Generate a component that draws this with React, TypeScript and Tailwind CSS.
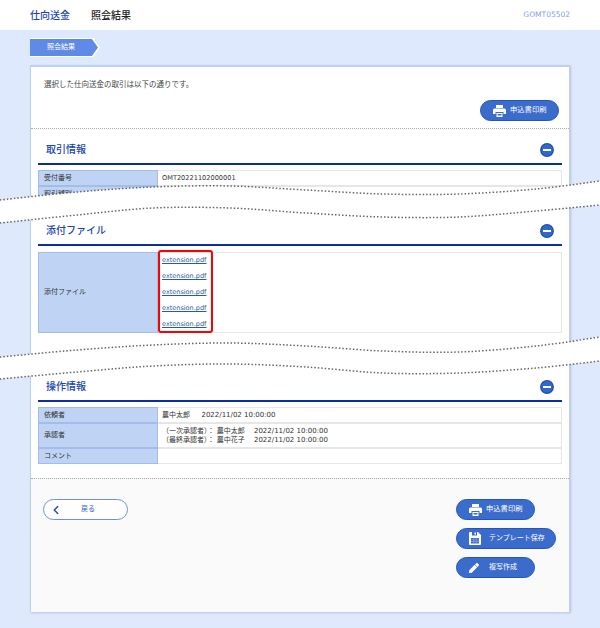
import React from "react";
import { FaPen } from "react-icons/fa";
import { ChevronLeft } from "lucide-react";

type P = [number, number];
const smooth = (pts: P[], move = true) => {
  let d = move ? `M${pts[0][0]} ${pts[0][1]}` : `L${pts[0][0]} ${pts[0][1]}`;
  for (let i = 0; i < pts.length - 1; i++) {
    const a = pts[Math.max(0, i - 1)], b = pts[i], c = pts[i + 1], e = pts[Math.min(pts.length - 1, i + 2)];
    d += ` C${b[0] + (c[0] - a[0]) / 6} ${b[1] + (c[1] - a[1]) / 6} ${c[0] - (e[0] - b[0]) / 6} ${c[1] - (e[1] - b[1]) / 6} ${c[0]} ${c[1]}`;
  }
  return d;
};
const xs = [0, 77, 153, 230, 306, 383, 459, 536, 600];
const curve = (ys: number[]): P[] => ys.map((y, i) => [xs[i], y]);
const waves = [
  [curve([200, 192, 187, 186, 190, 194, 194, 189, 181]), curve([223, 215, 208, 208, 213, 217, 217, 211, 205])],
  [curve([357, 350, 345, 343, 346, 351, 352, 346, 337]), curve([379, 372, 366, 364, 367, 373, 373, 368, 361])],
];

function Minus() {
  return (
    <svg width="14" height="14" viewBox="0 0 14 14" className="mr-[8px]">
      <circle cx="7" cy="7" r="6.3" fill="#3268c8" stroke="#1c4fb4" strokeWidth="1.2" />
      <rect x="3" y="6" width="8" height="2" fill="#fff" />
    </svg>
  );
}

function Heading({ title }: { title: string }) {
  return (
    <div className="flex h-[36px] items-end justify-between border-b-2 border-[#0b2f9e] pb-[6px] pl-[8px]">
      <span className="text-[10px] font-medium leading-[14px] text-[#1a44b0]">{title}</span>
      <Minus />
    </div>
  );
}

function Row({ label, h, children }: { label: string; h: string; children?: React.ReactNode }) {
  return (
    <div className="flex">
      <div className={`flex w-[120px] shrink-0 items-center border border-[#a5bde6] bg-[#bfd3f5] pl-[5px] text-[#333] ${h}`}>{label}</div>
      <div className={`flex flex-1 flex-col justify-center border border-l-0 border-[#e6e6e6] bg-white pl-[4px] leading-[9px] text-[#333] ${h}`}>{children}</div>
    </div>
  );
}

function Btn({ icon, label, w, gap, size }: { icon: React.ReactNode; label: string; w: string; gap: string; size: string }) {
  return (
    <button className={`flex h-[21px] items-center rounded-full border border-[#1f56c0] bg-[#3b6ccb] pl-[12px] text-white ${w} ${gap} ${size}`}>
      {icon}
      <span>{label}</span>
    </button>
  );
}

const printIcon = (
  <svg width="13" height="12" viewBox="0 0 13 12">
    <path d="M3 0h7v3H3z" fill="#fff" />
    <path d="M1.5 3.5h10A1.5 1.5 0 0 1 13 5v4h-2.5V7h-8v2H0V5a1.5 1.5 0 0 1 1.5-1.5z" fill="#fff" />
    <path d="M3.5 8h6v4h-6z" fill="#fff" />
    <path d="M4.5 9h4v1.5h-4z" fill="#3b6ccb" />
  </svg>
);

const saveIcon = (
  <svg width="12" height="13" viewBox="0 0 12 13">
    <path d="M1 0h2v3.5h5V0h1l3 3v9a1 1 0 0 1-1 1H1a1 1 0 0 1-1-1V1a1 1 0 0 1 1-1z" fill="#fff" />
    <path d="M5.5 0.5h1.500v2H5.500z" fill="#fff" />
    <path d="M2 6h8v5.500H2z" fill="#3b6ccb" />
    <path d="M2 7.800h8M2 9.500h8M4.700 6v5.500M7.300 6v5.500" stroke="#9db6e6" strokeWidth="0.5" />
  </svg>
);

export default function App() {
  return (
    <div className="relative h-[628px] w-[600px] overflow-hidden bg-[#dfe9fd] font-['DejaVu_Sans','Noto_Sans_CJK_JP',sans-serif] text-[7px]">
      <header className="flex h-[30px] items-center bg-white pl-[30px] pr-[30px] text-[10px] font-medium">
        <span className="text-[#1a44b0]">仕向送金</span>
        <span className="ml-[21px] text-[#222]">照会結果</span>
        <span className="ml-auto text-[7.5px] font-normal text-[#7f9fe8]">GOMT05502</span>
      </header>

      <div className="px-[30px]">
        <div className="mt-[8px] h-[19px] w-[70px] bg-white [clip-path:polygon(0_0,91%_0,100%_50%,91%_100%,0_100%)]">
          <div className="flex h-[17px] w-[68px] translate-y-[1px] items-center bg-[#5f8ae6] pl-[17px] text-[7px] text-white [clip-path:polygon(0_0,91%_0,100%_50%,91%_100%,0_100%)]">
            照会結果
          </div>
        </div>

        <main className="mt-[8px] h-[547px] border-l border-r border-t-2 border-[#bdd0f0] border-b-2 bg-white shadow-[1px_1px_2px_rgba(120,140,180,0.4)]">
          <section className="h-[62px] border-b border-dotted border-[#aaa] pl-[13px] pr-[10px] pt-[12px]">
            <p className="text-[7.5px] leading-[11px] text-[#444]">選択した仕向送金の取引は以下の通りです。</p>
            <div className="mt-[10px] flex justify-end">
              <Btn icon={printIcon} label="申込書印刷" w="w-[79px]" gap="gap-[4px]" size="text-[7.3px]" />
            </div>
          </section>

          <section className="h-[81px] overflow-hidden px-[7px]">
            <Heading title="取引情報" />
            <div className="mt-[5px]">
              <Row label="受付番号" h="h-[16px]"><span className="text-[6.6px]">OMT20221102000001</span></Row>
              <Row label="取引種別" h="h-[16px]" />
            </div>
          </section>

          <section className="h-[156px] px-[7px]">
            <Heading title="添付ファイル" />
            <div className="mt-[6px]">
              <Row label="添付ファイル" h="h-[81px]">
                <div className="flex flex-col gap-[7px] text-[6.5px] text-[#2a5a9c] underline">
                  <a>extension.pdf</a>
                  <a>extension.pdf</a>
                  <a>extension.pdf</a>
                  <a>extension.pdf</a>
                  <a>extension.pdf</a>
                </div>
              </Row>
            </div>
          </section>

          <section className="h-[113px] border-b border-dotted border-[#aaa] px-[7px]">
            <Heading title="操作情報" />
            <div className="mt-[5px]">
              <Row label="依頼者" h="h-[16px]">農中太郎　{"\u00a0\u00a0"}2022/11/02 10:00:00</Row>
              <Row label="承認者" h="h-[25px]">
                <div>（一次承認者）：{"\u00a0"}農中太郎　 2022/11/02 10:00:00</div>
                <div>（最終承認者）：{"\u00a0"}農中花子　 2022/11/02 10:00:00</div>
              </Row>
              <Row label="コメント" h="h-[16px]" />
            </div>
          </section>

          <footer className="flex h-[133px] justify-between bg-[#fafafa] pl-[12px] pr-[13px] pt-[20px]">
            <button className="flex h-[21px] w-[85px] items-center rounded-full border border-[#6d92dc] bg-white pl-[5px] text-[7px] text-[#3563c4]">
              <ChevronLeft size={14} strokeWidth={2.5} color="#1c4fb4" />
              <span className="ml-[18px]">戻る</span>
            </button>
            <div className="flex w-[100px] flex-col items-start gap-[8px]">
              <Btn icon={printIcon} label="申込書印刷" w="w-[79px]" gap="gap-[4px]" size="text-[7.3px]" />
              <Btn icon={saveIcon} label="テンプレート保存" w="w-[100px]" gap="gap-[8px]" size="text-[7px]" />
              <Btn icon={<FaPen size={10} color="#fff" />} label="複写作成" w="w-[79px]" gap="gap-[10px]" size="text-[7px]" />
            </div>
          </footer>
        </main>
      </div>

      <div className="absolute left-[158px] top-[250px] h-[83px] w-[55px] rounded-[3px] border-2 border-[#f00]" />

      <svg className="absolute left-0 top-0" width="600" height="628" viewBox="0 0 600 628">
        {waves.map(([top, bottom], i) => (
          <g key={i}>
            <path d={smooth(top) + " " + smooth([...bottom].reverse(), false) + " Z"} fill="#fff" />
            <path d={smooth(top)} fill="none" stroke="#666" strokeWidth="1.5" strokeDasharray="1.5 2" />
            <path d={smooth(bottom)} fill="none" stroke="#666" strokeWidth="1.5" strokeDasharray="1.5 2" />
          </g>
        ))}
      </svg>
    </div>
  );
}
